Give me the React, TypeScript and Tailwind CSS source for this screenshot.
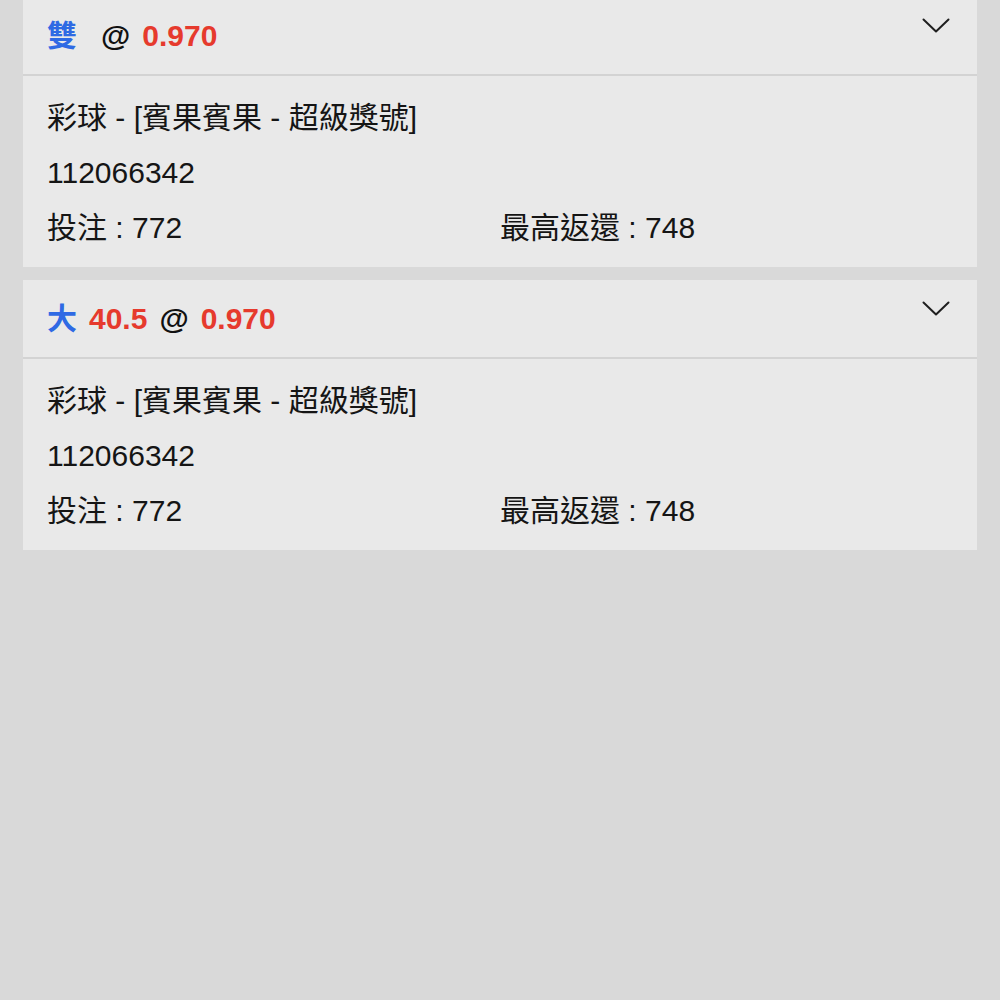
import React from 'react';

interface Bet {
    pick: string;
    line: string;
    odds: string;
    game: string;
    issue: string;
    stake: number;
    maxReturn: number;
}

const BETS: Bet[] = [
    { pick: '雙', line: '', odds: '0.970', game: '彩球 - [賓果賓果 - 超級獎號]', issue: '112066342', stake: 772, maxReturn: 748 },
    { pick: '大', line: '40.5', odds: '0.970', game: '彩球 - [賓果賓果 - 超級獎號]', issue: '112066342', stake: 772, maxReturn: 748 },
];

const Chevron = () => (
    <svg width="28" height="16" viewBox="0 0 28 16" fill="none" className="text-[#1f1f1f]">
        <path d="M1.5 1.5 L14 13.5 L26.5 1.5" stroke="currentColor" strokeWidth="2" strokeLinecap="round" strokeLinejoin="round" />
    </svg>
);

const BetCard = ({ bet }: { bet: Bet }) => (
    <div className="bg-[#e9e9e9]">
        {/* header */}
        <div className="relative h-[79px] border-b-2 border-[#d3d3d3] px-6 flex items-center">
            <div className="flex items-center gap-[12px] text-[30px] font-bold leading-none">
                <span className="text-[#2f6ae4]">{bet.pick}</span>
                <span className="text-[#e63a2d]">{bet.line}</span>
                <span className="text-[#111]">@</span>
                <span className="text-[#e63a2d]">{bet.odds}</span>
            </div>
            <div className="absolute right-[27px] top-[21px]">
                <Chevron />
            </div>
        </div>
        {/* body */}
        <div className="px-6 pt-[14px] pb-[12px] text-[30px] leading-[55px] text-[#151515]">
            <div>{bet.game}</div>
            <div>{bet.issue}</div>
            <div className="grid grid-cols-2">
                <div>投注 : {bet.stake}</div>
                <div>最高返還 : {bet.maxReturn}</div>
            </div>
        </div>
    </div>
);

export default function App() {
    return (
        <div
            className="min-h-[1000px] bg-[#d9d9d9] px-[23px] overflow-hidden"
            style={{ fontFamily: '"Liberation Sans", "Noto Sans CJK TC", sans-serif' }}
        >
            <div className="mt-[-3px] flex flex-col gap-[13px]">
                {BETS.map((bet, i) => (
                    <BetCard key={i} bet={bet} />
                ))}
            </div>
        </div>
    );
}
